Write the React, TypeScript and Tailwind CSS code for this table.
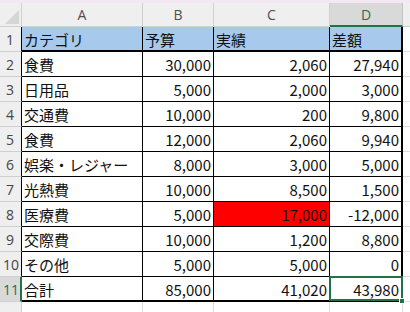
import React from "react";

const data: string[][] = [
  ["食費", "30,000", "2,060", "27,940"],
  ["日用品", "5,000", "2,000", "3,000"],
  ["交通費", "10,000", "200", "9,800"],
  ["食費", "12,000", "2,060", "9,940"],
  ["娯楽・レジャー", "8,000", "3,000", "5,000"],
  ["光熱費", "10,000", "8,500", "1,500"],
  ["医療費", "5,000", "17,000", "-12,000"],
  ["交際費", "10,000", "1,200", "8,800"],
  ["その他", "5,000", "5,000", "0"],
  ["合計", "85,000", "41,020", "43,980"],
];

const cellFont = { fontFamily: '"Noto Sans CJK JP", "Noto Sans", sans-serif' };
const uiFont = { fontFamily: '"Open Sans", "Noto Sans", sans-serif' };

export default function App() {
  return (
    <div className="w-[410px] h-[312px] overflow-hidden bg-white flex flex-col">
      <div className="h-[3px] bg-[#f3e8f1] shrink-0" />
      <div
        className="grid flex-1"
        style={{
          gridTemplateColumns: "22px 121px 71px 116px 73px 1fr",
          gridTemplateRows: "24px repeat(11, 25px) 1fr",
        }}
      >
        {/* header row */}
        <div className="relative bg-[#efefef] border-r border-b border-[#d0d0d0]">
          <svg width="22" height="24" className="absolute inset-0">
            <polygon points="19,7 19,21 5,21" fill="#d6d6d6" />
          </svg>
        </div>
        {["A", "B", "C"].map((l) => (
          <div
            key={l}
            className="bg-[#efefef] border-r border-b border-[#d0d0d0] flex items-center justify-center text-[14px] text-[#505050]"
            style={uiFont}
          >
            {l}
          </div>
        ))}
        <div
          className="bg-[#d9d9d9] border-r border-[#c4c4c4] border-b-2 border-b-[#217346] flex items-center justify-center text-[14px] text-[#217346]"
          style={uiFont}
        >
          D
        </div>
        <div className="bg-[#efefef] border-b border-[#d0d0d0]" />

        {/* row 1 */}
        <div
          className="bg-[#efefef] border-r border-r-black border-b border-b-[#d0d0d0] flex items-center pl-[6px] text-[14px] text-[#444]"
          style={uiFont}
        >
          1
        </div>
        {["カテゴリ", "予算", "実績", "差額"].map((t, i) => (
          <div
            key={t}
            className={`bg-[#a6c9ec] border-b-2 border-b-black border-r border-r-black flex items-center pl-[2px] pt-[3px] text-[15px] text-[#111] ${
              i === 3 ? "border-r-2" : ""
            }`}
            style={cellFont}
          >
            {t}
          </div>
        ))}
        <div className="border-b border-[#dcdcdc]" />

        {/* data rows */}
        {data.map((row, ri) => {
          const n = ri + 2;
          const last = n === 11;
          return (
            <React.Fragment key={n}>
              <div
                className={`flex items-center text-[14px] ${
                  last
                    ? "bg-[#d9d9d9] border-r-2 border-r-[#217346] text-[#217346] pl-[3px]"
                    : "bg-[#efefef] border-r border-r-black text-[#444] " + (n >= 10 ? "pl-[3px]" : "pl-[6px]")
                } border-b border-b-[#d0d0d0]`}
                style={uiFont}
              >
                {n}
              </div>
              {row.map((v, ci) => {
                const red = n === 8 && ci === 2;
                return (
                  <div
                    key={ci}
                    className={`relative flex items-center pt-[3px] text-[15px] text-[#111] border-r border-r-black ${
                      last ? "border-b-2" : "border-b"
                    } border-b-black ${ci === 0 ? "pl-[2px]" : "justify-end pr-[2px]"} ${
                      ci === 3 ? "border-r-2" : ""
                    } ${red ? "bg-[#ff0000]" : "bg-white"}`}
                    style={cellFont}
                  >
                    {v}
                    {last && ci === 3 && (
                      <>
                        <div className="absolute -left-[1px] -top-[1px] -right-[2px] -bottom-[1px] border-2 border-[#217346] pointer-events-none" />
                        <div className="absolute -right-[4px] -bottom-[4px] w-[6px] h-[6px] bg-[#217346] border border-white" />
                      </>
                    )}
                  </div>
                );
              })}
              <div className="border-b border-[#dcdcdc]" />
            </React.Fragment>
          );
        })}

        {/* row 12 partial */}
        <div className="bg-[#efefef] border-r border-[#d0d0d0]" />
        <div className="border-r border-[#dcdcdc]" />
        <div className="border-r border-[#dcdcdc]" />
        <div className="border-r border-[#dcdcdc]" />
        <div className="border-r border-[#dcdcdc]" />
        <div />
      </div>
    </div>
  );
}
